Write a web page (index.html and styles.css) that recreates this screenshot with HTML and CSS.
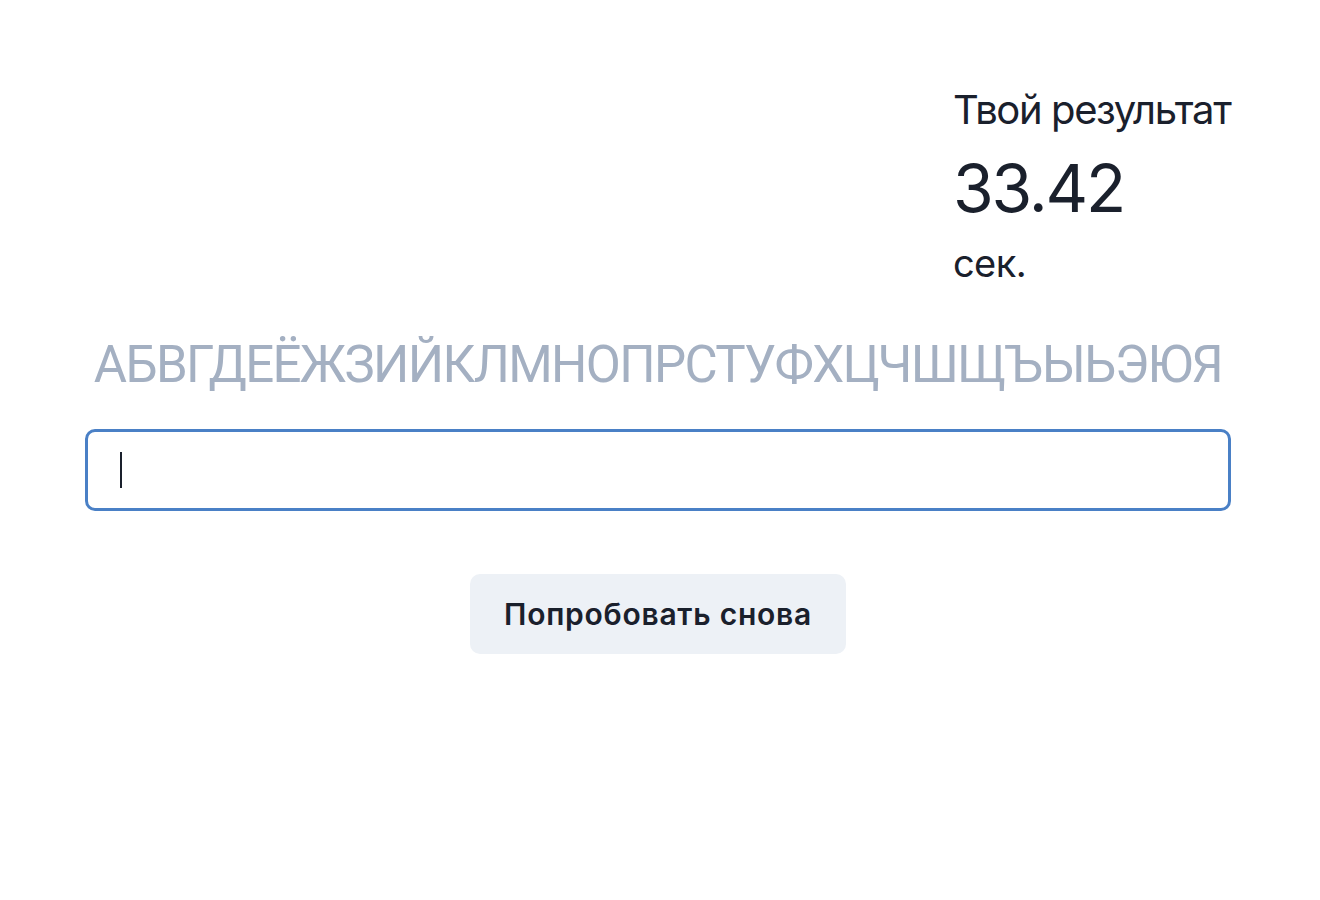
FILE: index.html
```html
<!DOCTYPE html>
<html lang="ru">
<head>
<meta charset="utf-8">
<link rel="stylesheet" href="styles.css">
</head>
<body>
<main class="page">
  <div class="result-row">
    <div class="result">
      <div class="result-label">Твой результат</div>
      <div class="result-value">33.42</div>
      <div class="result-unit">сек.</div>
    </div>
  </div>
  <div class="alphabet">АБВГДЕЁЖЗИЙКЛМНОПРСТУФХЦЧШЩЪЫЬЭЮЯ</div>
  <div class="input-box"><span class="caret"></span></div>
  <div class="actions">
    <button class="retry">Попробовать снова</button>
  </div>
</main>
</body>
</html>
```
FILE: styles.css
```css
html, body {
  margin: 0;
  padding: 0;
  background: #ffffff;
}
body {
  font-family: Inter, "Noto Sans", sans-serif;
  color: #1a202c;
}
.page {
  width: 1146px;
  margin: 0 auto;
  padding-top: 86px;
  transform: translateX(-2px);
}
.result-row {
  display: flex;
  justify-content: flex-end;
}
.result {
  width: 278px;
}
.result-label {
  font-size: 40px;
  line-height: 48px;
  letter-spacing: -1.4px;
  white-space: nowrap;
}
.result-value {
  font-size: 66px;
  line-height: 108px;
  letter-spacing: -2.2px;
}
.result-unit {
  font-size: 38px;
  line-height: 42px;
  letter-spacing: -0.6px;
}
.alphabet {
  margin-top: 51px;
  text-align: center;
  font-family: Roboto, Inter, sans-serif;
  font-size: 51px;
  line-height: 60px;
  letter-spacing: -1.65px;
  color: #a4b0c2;
  white-space: nowrap;
}
.input-box {
  margin-top: 34px;
  height: 76px;
  border: 3px solid #4a80c6;
  border-radius: 10px;
  display: flex;
  align-items: center;
  padding-left: 32px;
}
.caret {
  width: 2px;
  height: 36px;
  background: #1a202c;
}
.actions {
  display: flex;
  justify-content: center;
  margin-top: 63px;
}
.retry {
  font-family: Inter, "Noto Sans", sans-serif;
  font-weight: 600;
  font-size: 30px;
  letter-spacing: 0.75px;
  color: #1a202c;
  background: #edf1f6;
  border: none;
  border-radius: 10px;
  width: 376px;
  height: 80px;
}
```
